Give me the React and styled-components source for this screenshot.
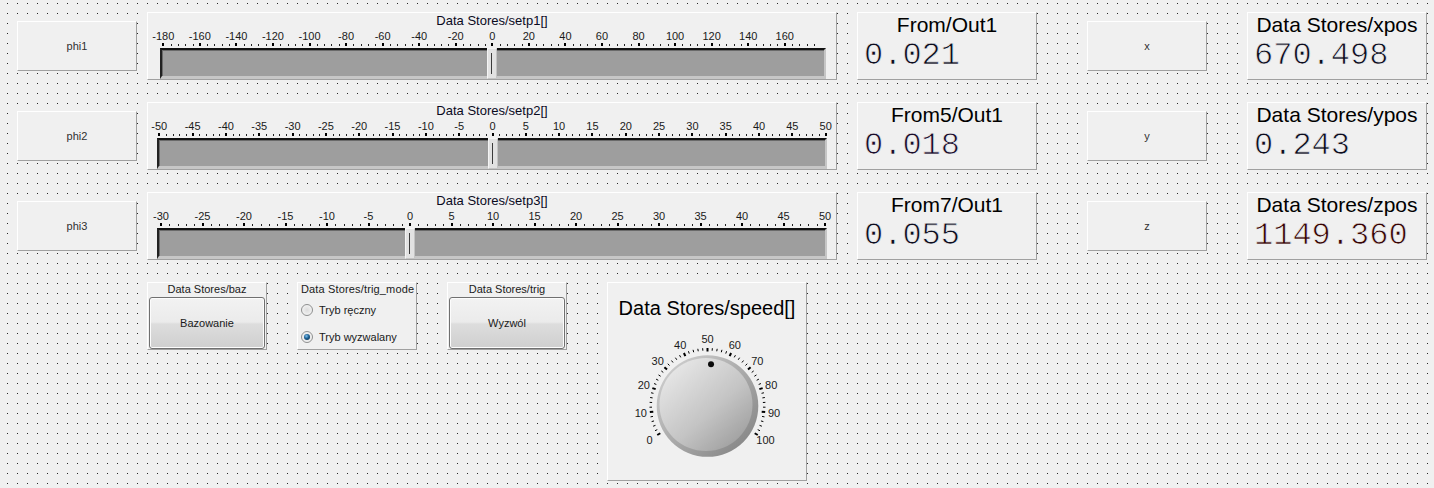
import React from 'react';
import styled, { createGlobalStyle, css } from 'styled-components';

const GlobalStyle = createGlobalStyle`
  html, body { margin: 0; padding: 0; }
  body {
    background-color: #262626;
    background-image:
      linear-gradient(to right, transparent 1px, #f0f0f0 1px),
      linear-gradient(to bottom, transparent 1px, #f0f0f0 1px);
    background-size: 10px 10px;
    background-position: 7px 3px;
    font-family: "Liberation Sans", Arial, sans-serif;
    overflow: hidden;
  }
`;

const edge = css`
  box-sizing: border-box;
  background-color: #f0f0f0;
  background-clip: padding-box;
  border: 1px solid;
  border-color: #ffffff rgba(0, 0, 0, 0.33) rgba(0, 0, 0, 0.33) #ffffff;
`;

const Canvas = styled.div`
  display: flex;
  flex-direction: column;
  gap: 22px;
  padding: 12px 0 0 17px;
`;

const Row = styled.div`
  display: flex;
  align-items: flex-start;
  height: 68px;
`;

const PushButton = styled.button`
  ${edge};
  width: 120px;
  height: 50px;
  margin: 9px 0 0 ${p => p.$offset || 0}px;
  padding: 0;
  font: 11px "Liberation Sans", Arial, sans-serif;
  color: #303030;
  cursor: default;
`;

const Panel = styled.div`
  ${edge};
  width: ${p => p.$w}px;
  height: ${p => p.$h}px;
  margin-left: ${p => p.$offset || 0}px;
  display: flex;
  flex-direction: column;
`;

/* ---------- slider ---------- */
const SliderTitle = styled.div`
  font-size: 13px;
  line-height: 15px;
  text-align: center;
  color: #0a0a1e;
`;

const LabelRow = styled.div`
  position: relative;
  height: 13px;
  margin-top: 2px;
`;

const ScaleLabel = styled.span`
  position: absolute;
  top: 0;
  transform: translateX(-50%);
  font-size: 11px;
  line-height: 13px;
  color: #1a1a1a;
  white-space: nowrap;
`;

const TickStrip = styled.svg`
  display: block;
  height: 5px;
  width: 100%;
`;

const Track = styled.div`
  position: relative;
  box-sizing: border-box;
  margin-left: ${p => p.$left}px;
  width: ${p => p.$width}px;
  height: 31px;
  background: #9e9e9e;
  border-top: 2px solid #111;
  border-left: 2px solid #222;
  border-right: 2px solid #c6c6c6;
  border-bottom: 3px solid #c6c6c6;
  box-shadow: inset 1px 1px 0 #6a6a6a;
`;

const Thumb = styled.div`
  position: absolute;
  top: -2px;
  bottom: -3px;
  width: 10px;
  box-sizing: border-box;
  background: #e2e2e2;
  border: 1px solid;
  border-color: #f4f4f4 #c4c4c4 #c4c4c4 #f4f4f4;
  &::after {
    content: '';
    position: absolute;
    left: 3px;
    top: 4px;
    bottom: 4px;
    width: 1px;
    background: #3c3c3c;
  }
`;

function Slider({ title, min, max, major, minor, start, end, trackLeft, trackRight, value, skipLast }) {
  const pos = v => start + ((v - min) / (max - min)) * (end - start);
  const labels = [];
  for (let v = min; v <= max + 1e-9; v += major) {
    if (skipLast && v === max) continue;
    labels.push(v);
  }
  const ticks = [];
  for (let v = min; v <= max + 1e-9; v += minor) {
    if (skipLast && v === max) continue;
    ticks.push({ v, big: Math.abs(((v - min) % major)) < 1e-9 });
  }
  return (
    <Panel $w={690} $h={68} $offset={10}>
      <SliderTitle>{title}</SliderTitle>
      <LabelRow>
        {labels.map(v => (
          <ScaleLabel key={v} style={{ left: pos(v) }}>{v}</ScaleLabel>
        ))}
      </LabelRow>
      <TickStrip>
        {ticks.map(t =>
          t.big ? (
            <rect key={t.v} x={Math.round(pos(t.v)) - 1} y={0} width={2} height={3} fill="#000" />
          ) : (
            <rect key={t.v} x={Math.round(pos(t.v))} y={1} width={1} height={2} fill="#222" />
          )
        )}
      </TickStrip>
      <Track $left={trackLeft} $width={trackRight - trackLeft}>
        <Thumb style={{ left: pos(value) - trackLeft - 2 - 5 }} />
      </Track>
    </Panel>
  );
}

/* ---------- numeric display ---------- */
const DisplayTitle = styled.div`
  font-size: 21px;
  line-height: 22px;
  margin-top: 1px;
  text-align: center;
  color: #000;
  white-space: nowrap;
`;

const DisplayValue = styled.div`
  font-family: "Liberation Mono", "Courier New", monospace;
  font-size: 32px;
  line-height: 36px;
  margin-top: 2px;
  padding-left: 6px;
  color: ${p => p.$color || '#0c0c1e'};
  -webkit-text-stroke: 0.75px #f0f0f0;
  white-space: nowrap;
`;

function Display({ title, value, color, offset }) {
  return (
    <Panel $w={180} $h={68} $offset={offset}>
      <DisplayTitle>{title}</DisplayTitle>
      <DisplayValue $color={color}>{value}</DisplayValue>
    </Panel>
  );
}

/* ---------- bottom widgets ---------- */
const BottomRow = styled.div`
  display: flex;
  align-items: flex-start;
  margin-left: 130px;
`;

const SmallTitle = styled.div`
  font-size: 11px;
  line-height: 13px;
  height: 14px;
  text-align: ${p => p.$align || 'center'};
  padding-left: ${p => (p.$align === 'left' ? 3 : 0)}px;
  letter-spacing: ${p => p.$spacing || 0}px;
  color: #1a1a1a;
  white-space: nowrap;
`;

const WinButton = styled.button`
  box-sizing: border-box;
  margin: 0 1px;
  height: 52px;
  border: 1px solid #707070;
  border-radius: 3px;
  box-shadow: inset 0 0 0 1px #fcfcfc;
  background: linear-gradient(to bottom, #f2f2f2 0%, #ebebeb 48%, #dddddd 52%, #cfcfcf 100%);
  font: 11px "Liberation Sans", Arial, sans-serif;
  color: #1a1a1a;
  padding: 0;
  cursor: default;
`;

const RadioList = styled.div`
  display: flex;
  flex-direction: column;
  gap: 13px;
  margin-top: 6px;
  padding-left: 3px;
`;

const RadioRow = styled.label`
  display: flex;
  align-items: center;
  gap: 6px;
  height: 14px;
  font-size: 11px;
  color: #1a1a1a;
  white-space: nowrap;
`;

const RadioDot = styled.span`
  position: relative;
  box-sizing: border-box;
  width: 12px;
  height: 12px;
  border-radius: 50%;
  border: 1px solid #8e8f8f;
  background: radial-gradient(circle at 50% 50%, #dcdcdc 0%, #f4f4f4 80%);
  ${p =>
    p.$checked &&
    css`
      &::after {
        content: '';
        position: absolute;
        inset: 2px;
        border-radius: 50%;
        background: radial-gradient(circle at 40% 35%, #7ec0ee 0%, #1b5f92 45%, #0b2a44 100%);
      }
    `}
`;

const KnobTitle = styled.div`
  font-size: 20px;
  line-height: 22px;
  padding-top: 14px;
  text-align: center;
  color: #000;
  white-space: nowrap;
`;

const KnobSvg = styled.svg`
  display: block;
`;

function Knob({ value }) {
  const cx = 99.5;
  const cy = 87;
  const rad = a => ((a - 90) * Math.PI) / 180;
  const ticks = [];
  for (let i = 0; i <= 50; i++) {
    const a = -120 + i * 4.8;
    const big = i % 5 === 0;
    const r1 = big ? 54.5 : 55.5;
    const r2 = 58;
    ticks.push(
      <line
        key={i}
        x1={cx + r1 * Math.cos(rad(a))}
        y1={cy + r1 * Math.sin(rad(a))}
        x2={cx + r2 * Math.cos(rad(a))}
        y2={cy + r2 * Math.sin(rad(a))}
        stroke="#000"
        strokeWidth={big ? 2 : 1}
      />
    );
  }
  const labels = [];
  for (let v = 0; v <= 100; v += 10) {
    const a = -120 + v * 2.4;
    labels.push(
      <text
        key={v}
        x={cx + 67 * Math.cos(rad(a))}
        y={cy + 67 * Math.sin(rad(a))}
        textAnchor="middle"
        dominantBaseline="central"
        fontSize="11"
        fontFamily="Liberation Sans, Arial, sans-serif"
        fill="#1a1a1a"
      >
        {v}
      </text>
    );
  }
  const ia = -120 + value * 2.4;
  return (
    <KnobSvg width="198" height="161" viewBox="0 0 198 161">
      <defs>
        <linearGradient id="rim" x1="0" y1="0" x2="1" y2="1">
          <stop offset="0" stopColor="#d6d6d6" />
          <stop offset="1" stopColor="#7e7e7e" />
        </linearGradient>
        <linearGradient id="face" x1="0.15" y1="0.1" x2="0.9" y2="0.95">
          <stop offset="0" stopColor="#e6e6e6" />
          <stop offset="0.55" stopColor="#c4c4c4" />
          <stop offset="1" stopColor="#9c9c9c" />
        </linearGradient>
      </defs>
      {ticks}
      {labels}
      <circle cx={cx} cy={cy} r="50.8" fill="url(#rim)" />
      <circle cx={cx - 1.5} cy={cy - 1.5} r="46.5" fill="url(#face)" />
      <circle
        cx={cx + 42 * Math.cos(rad(ia))}
        cy={cy + 42 * Math.sin(rad(ia))}
        r="3"
        fill="#0a0a0a"
      />
    </KnobSvg>
  );
}

/* ---------- data ---------- */
const rows = [
  {
    btn: 'phi1',
    slider: { title: 'Data Stores/setp1[]', min: -180, max: 180, major: 20, minor: 4, start: 15.3, end: 673.3, trackLeft: 12, trackRight: 678, value: 0, skipLast: true },
    disp: { title: 'From/Out1', value: '0.021' },
    btn2: 'x',
    disp2: { title: 'Data Stores/xpos', value: '670.498' },
  },
  {
    btn: 'phi2',
    slider: { title: 'Data Stores/setp2[]', min: -50, max: 50, major: 5, minor: 1, start: 11.3, end: 677.7, trackLeft: 9, trackRight: 679, value: 0 },
    disp: { title: 'From5/Out1', value: '0.018', color: '#1a0c2a' },
    btn2: 'y',
    disp2: { title: 'Data Stores/ypos', value: '0.243' },
  },
  {
    btn: 'phi3',
    slider: { title: 'Data Stores/setp3[]', min: -30, max: 50, major: 5, minor: 1, start: 13, end: 677, trackLeft: 9, trackRight: 679, value: 0 },
    disp: { title: 'From7/Out1', value: '0.055' },
    btn2: 'z',
    disp2: { title: 'Data Stores/zpos', value: '1149.360', color: '#360404' },
  },
];

export default function App() {
  return (
    <>
      <GlobalStyle />
      <Canvas>
        {rows.map(r => (
          <Row key={r.btn}>
            <PushButton>{r.btn}</PushButton>
            <Slider {...r.slider} />
            <Display {...r.disp} offset={20} />
            <PushButton $offset={50}>{r.btn2}</PushButton>
            <Display {...r.disp2} offset={40} />
          </Row>
        ))}
        <BottomRow>
          <Panel $w={120} $h={68}>
            <SmallTitle>Data Stores/baz</SmallTitle>
            <WinButton>Bazowanie</WinButton>
          </Panel>
          <Panel $w={120} $h={68} $offset={30}>
            <SmallTitle $align="left" $spacing={0.15}>Data Stores/trig_mode</SmallTitle>
            <RadioList>
              <RadioRow>
                <RadioDot />
                Tryb ręczny
              </RadioRow>
              <RadioRow>
                <RadioDot $checked />
                Tryb wyzwalany
              </RadioRow>
            </RadioList>
          </Panel>
          <Panel $w={120} $h={68} $offset={30}>
            <SmallTitle>Data Stores/trig</SmallTitle>
            <WinButton>Wyzwól</WinButton>
          </Panel>
          <Panel $w={200} $h={199} $offset={40}>
            <KnobTitle>Data Stores/speed[]</KnobTitle>
            <Knob value={52} />
          </Panel>
        </BottomRow>
      </Canvas>
    </>
  );
}
